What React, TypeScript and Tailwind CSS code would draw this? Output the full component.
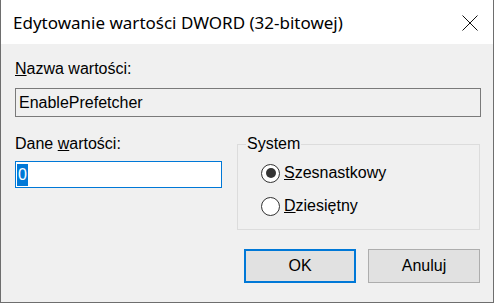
import React from "react";

const dlgFont = { fontFamily: '"Liberation Sans", Arial, sans-serif' };

function Radio({ checked, label, hot }: { checked: boolean; label: string; hot: string }) {
    return (
        <label className="flex items-center h-[18px] pl-[23px] gap-[4px]">
            <span className="w-[19px] h-[19px] rounded-full border border-[#333] bg-white flex items-center justify-center">
                {checked && <span className="w-[10px] h-[10px] rounded-full bg-[#333]" />}
            </span>
            <span className="leading-[18px]">
                <u>{hot}</u>{label}
            </span>
        </label>
    );
}

export default function App() {
    return (
        <div className="w-[494px] h-[303px] flex flex-col border-x border-b border-[#6e6e6e] text-black text-[16px]" style={dlgFont}>
            {/* title bar */}
            <div className="h-[44px] bg-white flex items-center justify-between pl-[12px] pr-[15px]">
                <span className="text-[17px] leading-[20px] mt-[2px]" style={{ fontFamily: '"Noto Sans", "Open Sans", sans-serif' }}>
                    Edytowanie wartości DWORD (32-bitowej)
                </span>
                <svg width="16" height="16" viewBox="0 0 16 16" className="mt-[1px]">
                    <path d="M0.5 0.5 L15.5 15.5 M15.5 0.5 L0.5 15.5" stroke="#111" strokeWidth="1" />
                </svg>
            </div>

            {/* body */}
            <div className="flex-1 bg-[#f0f0f0] pl-[14px] pr-[12px] pt-[16px] flex flex-col">
                <div className="leading-[18px] h-[18px]">
                    <u>N</u>azwa wartości:
                </div>
                <div className="mt-[10px] h-[29px] border border-[#7a7a7a] bg-[#f0f0f0] pl-[3px] flex items-center leading-[18px]">
                    EnablePrefetcher
                </div>

                <div className="mt-[18px] flex flex-row h-[95px]">
                    <div className="flex flex-col w-[207px]">
                        <div className="leading-[18px] h-[18px]">
                            Dane <u>w</u>artości:
                        </div>
                        <div className="mt-[8px] h-[27px] border border-[#0078d7] bg-white pl-[1px] flex items-center">
                            <span className="bg-[#0078d7] text-white leading-[22px] px-[1px]">0</span>
                        </div>
                    </div>

                    <fieldset className="ml-[15px] w-[243px] h-[95px] border border-[#dcdcdc]">
                        <legend className="ml-[8px] px-[1px] leading-[18px]">System</legend>
                        <div className="flex flex-col gap-[15px] pt-[11px]">
                            <Radio checked={true} hot="S" label="zesnastkowy" />
                            <Radio checked={false} hot="D" label="ziesiętny" />
                        </div>
                    </fieldset>
                </div>

                <div className="mt-[19px] flex flex-row justify-end gap-[12px] mr-[1px]">
                    <button className="w-[112px] h-[34px] bg-[#e1e1e1] border-2 border-[#0078d7] leading-[18px]">OK</button>
                    <button className="w-[112px] h-[34px] bg-[#e1e1e1] border border-[#adadad] leading-[18px]">Anuluj</button>
                </div>
            </div>
        </div>
    );
}
